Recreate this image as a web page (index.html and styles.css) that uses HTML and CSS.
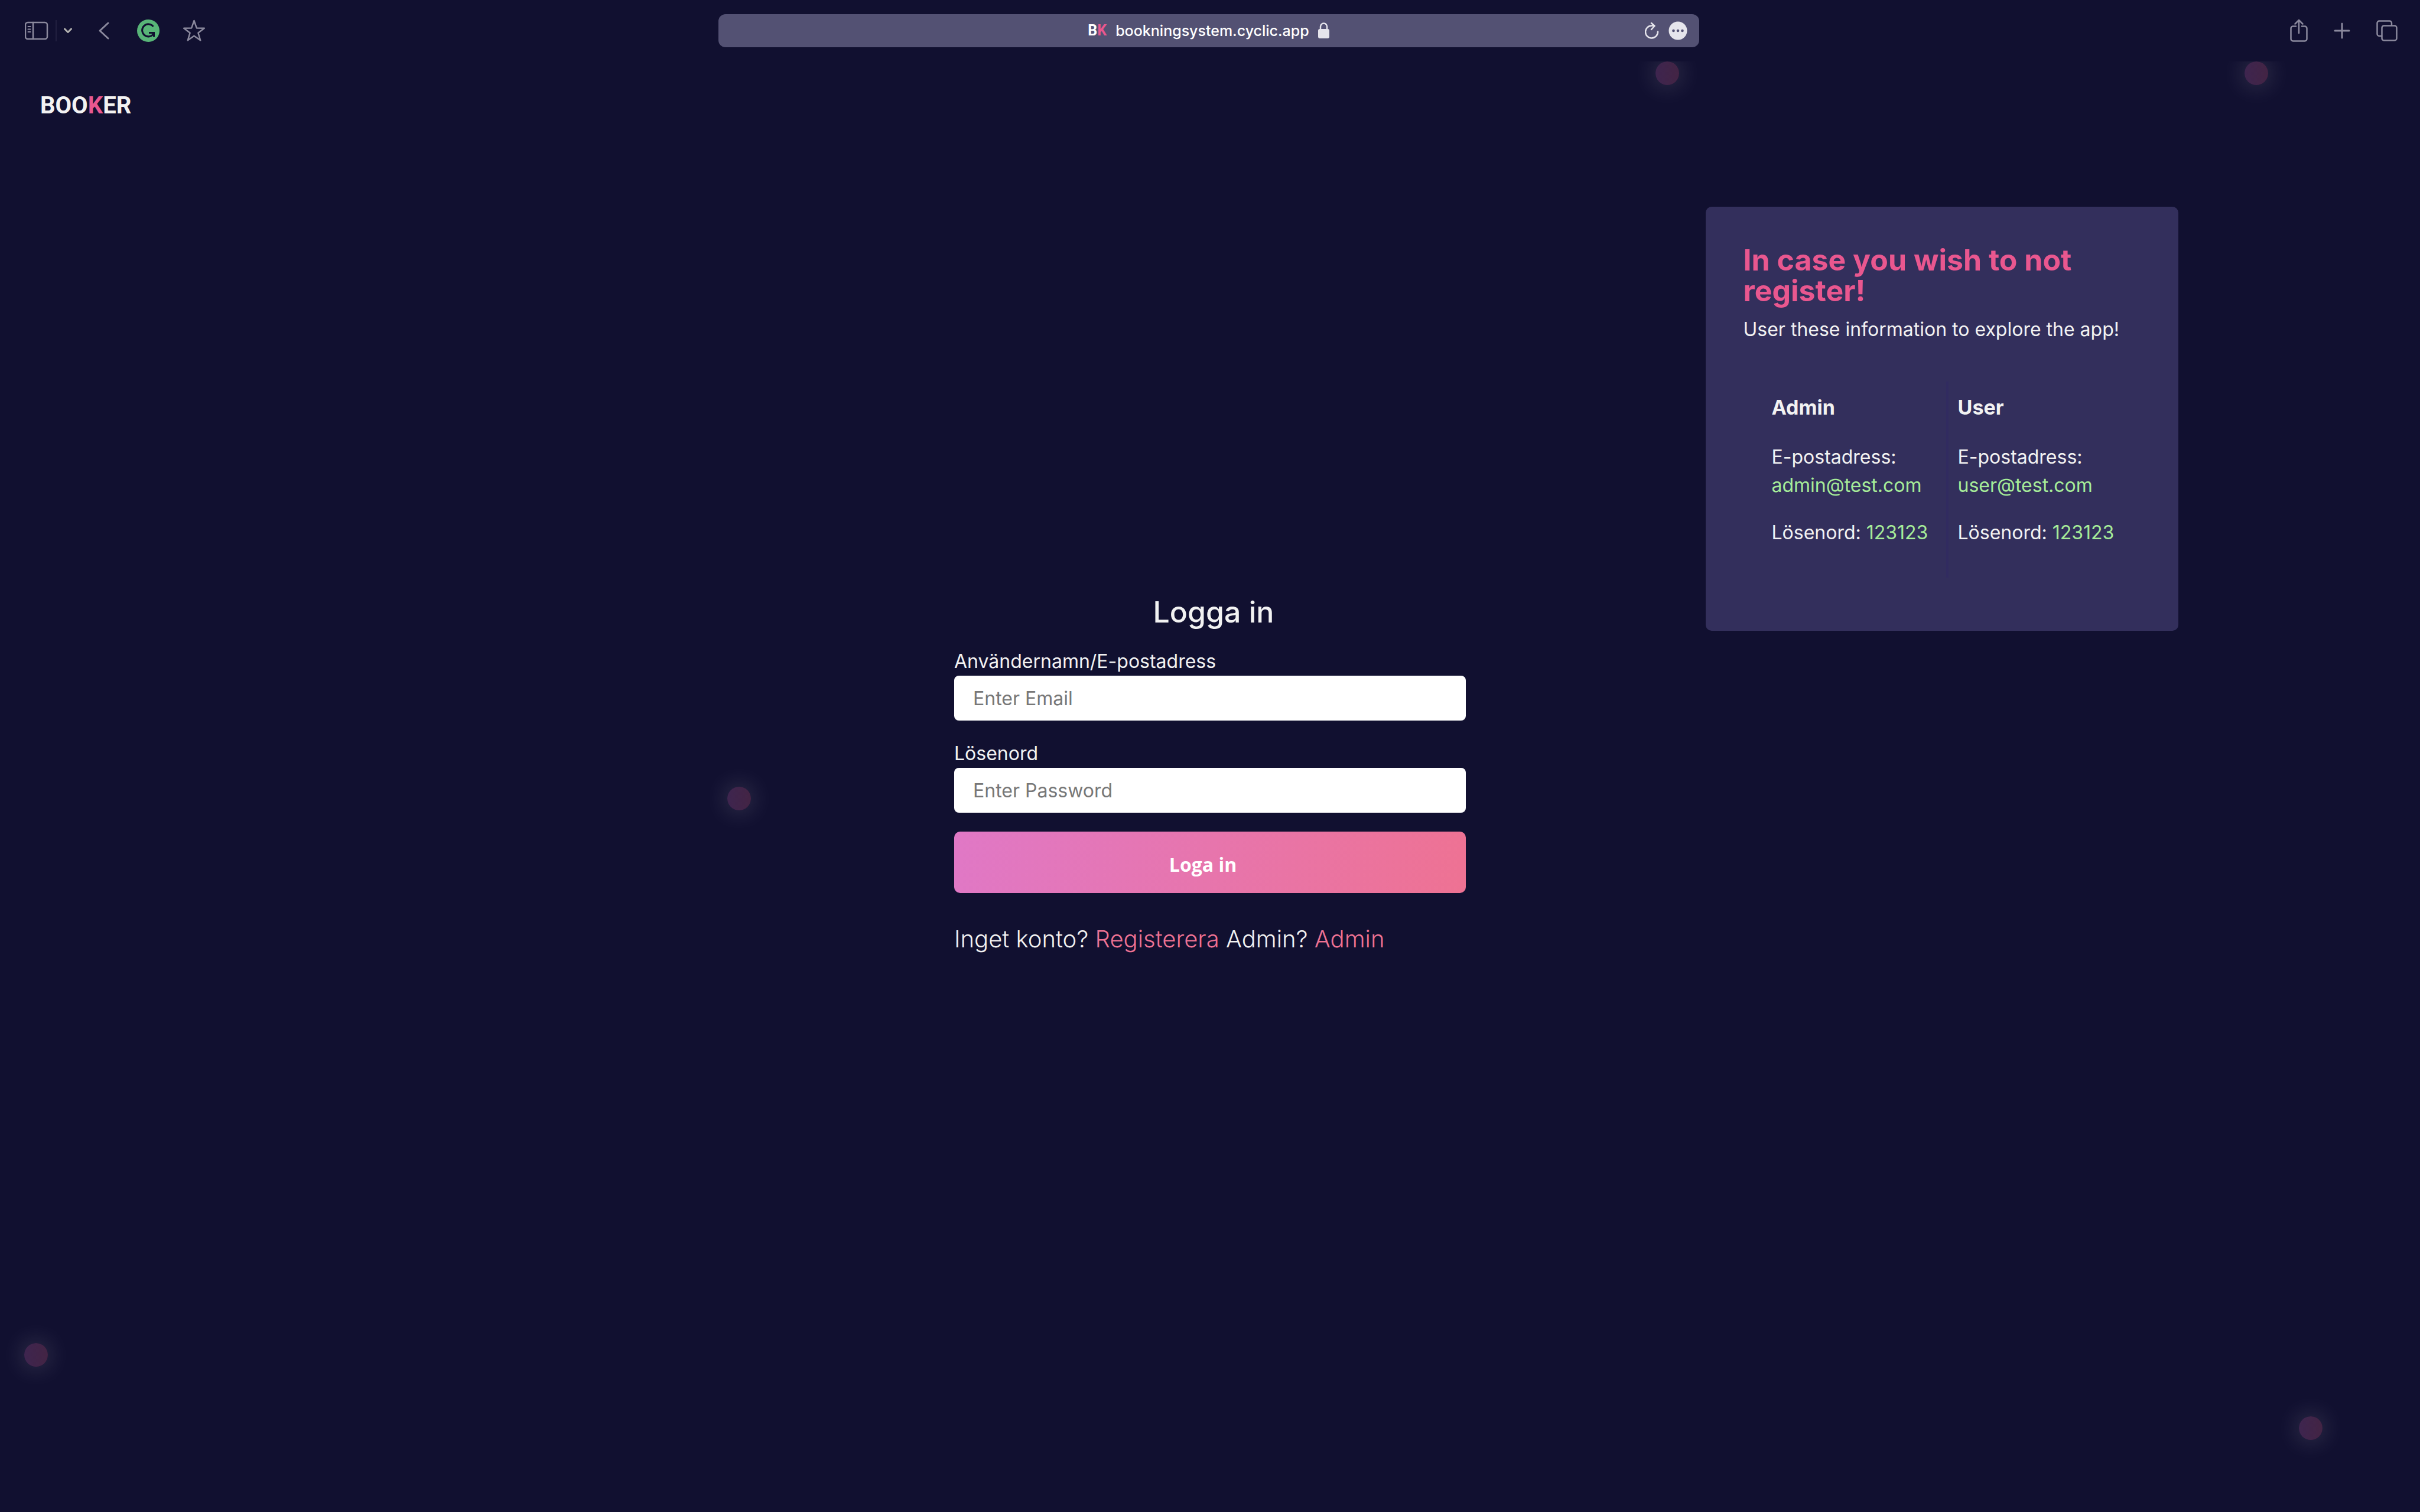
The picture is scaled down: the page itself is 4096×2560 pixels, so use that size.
FILE: index.html
```html
<!DOCTYPE html>
<html lang="sv">
<head>
<meta charset="utf-8">
<title>Booker</title>
<link rel="stylesheet" href="styles.css">
</head>
<body>
<header class="toolbar">
  <div class="tools">
    <div class="tool-pair">
      <button class="tool" aria-label="Sidebar"><svg width="40" height="32" viewBox="0 0 40 32"><rect x="1" y="2" width="37" height="28" rx="4"/><path d="M14 2v28"/><path class="thin" d="M5.500 9h4M5.500 13.500h4M5.500 18h4"/></svg></button>
      <span class="divider"></span>
      <button class="tool tool-light" aria-label="Tab groups"><svg width="14" height="12" viewBox="0 0 14 12"><path class="bold" d="M1.500 3l5.500 5.500L12.500 3"/></svg></button>
    </div>
    <button class="tool" aria-label="Back"><svg width="28" height="32" viewBox="0 0 28 32"><path class="bold" d="M21 3L7 16l14 13"/></svg></button>
    <button class="tool" aria-label="Grammarly"><svg width="40" height="40" viewBox="0 0 40 40"><circle class="disc" cx="21" cy="20" r="19"/><path class="mark" d="M29.500 13A10.500 10.500 0 1 0 30 25"/><path class="mark" d="M22 23.500h8.500v7"/></svg></button>
    <button class="tool" aria-label="Bookmark"><svg width="38" height="38" viewBox="0 0 38 38"><path d="M18.500 2l4.300 12.400 13 .3-10.400 8 3.800 12.600L18.500 27.800 7.800 35.300l3.800-12.600-10.400-8 13-.3z"/></svg></button>
  </div>
  <div class="address">
    <div class="site"><span class="favicon">B<span class="pink">K</span></span><span class="url">bookningsystem.cyclic.app</span><svg class="lock" width="20" height="28" viewBox="0 0 20 28"><rect class="fill" x="0" y="11" width="19" height="16" rx="3"/><path d="M4 12V7a5.500 5.500 0 0 1 11 0v5"/></svg></div>
    <div class="actions">
      <button class="tool" aria-label="Reload"><svg width="24" height="28" viewBox="0 0 24 28"><path d="M22 15.500A10.500 10.500 0 1 1 12 5.500h4"/><path d="M11 1l5.500 5L11 12"/></svg></button>
      <button class="tool" aria-label="More"><svg width="32" height="32" viewBox="0 0 32 32"><circle class="fill" cx="16" cy="16" r="15.500"/><g class="dots"><circle cx="8.500" cy="16" r="2.300"/><circle cx="16" cy="16" r="2.300"/><circle cx="23.500" cy="16" r="2.300"/></g></svg></button>
    </div>
  </div>
  <div class="tools tools-end">
    <button class="tool" aria-label="Share"><svg width="30" height="40" viewBox="0 0 30 40"><path d="M10 12.500H5a3.500 3.500 0 0 0-3.500 3.500v18A3.500 3.500 0 0 0 5 37.500h20a3.500 3.500 0 0 0 3.500-3.500V16a3.500 3.500 0 0 0-3.500-3.500h-5M15 24V3M8.500 8.500L15 2l6.500 6.500"/></svg></button>
    <button class="tool" aria-label="New tab"><svg width="28" height="28" viewBox="0 0 28 28"><path class="bold" d="M14 2v24M2 14h24"/></svg></button>
    <button class="tool" aria-label="Tabs"><svg width="36" height="36" viewBox="0 0 36 36"><path d="M26 8V5a3.500 3.500 0 0 0-3.500-3.500H5A3.500 3.500 0 0 0 1.500 5v18.500A3.500 3.500 0 0 0 5 27h4"/><rect x="9.500" y="9.500" width="25" height="25" rx="3.500"/></svg></button>
  </div>
</header>

<div class="page">
  <span class="bubble bubble-a"></span>
  <span class="bubble bubble-b"></span>
  <span class="bubble bubble-c"></span>
  <span class="bubble bubble-d"></span>
  <span class="bubble bubble-e"></span>

  <nav class="nav"><a class="logo" href="#">BOO<span class="pink">K</span>ER</a></nav>

  <main class="content">
    <form class="login">
      <h1 class="login-title">Logga in</h1>
      <div class="field">
        <label for="email">Användernamn/E-postadress</label>
        <input id="email" type="text" placeholder="Enter Email">
      </div>
      <div class="field">
        <label for="password">Lösenord</label>
        <input id="password" type="password" placeholder="Enter Password">
      </div>
      <button class="submit" type="button">Loga in</button>
      <p class="signup">Inget konto? <a href="#">Registerera</a> Admin? <a href="#">Admin</a></p>
    </form>

    <aside class="card">
      <h2>In case you wish to not register!</h2>
      <p class="lead">User these information to explore the app!</p>
      <div class="accounts">
        <section class="account">
          <h3>Admin</h3>
          <p>E-postadress:<br><span class="value">admin@test.com</span></p>
          <p>Lösenord: <span class="value">123123</span></p>
        </section>
        <section class="account">
          <h3>User</h3>
          <p>E-postadress:<br><span class="value">user@test.com</span></p>
          <p>Lösenord: <span class="value">123123</span></p>
        </section>
      </div>
    </aside>
  </main>
</div>
</body>
</html>
```
FILE: styles.css
```css
* { box-sizing: border-box; }

body {
  margin: 0;
  min-height: 100vh;
  display: flex;
  flex-direction: column;
  background: #111030;
  color: #f2f2f2;
  font-family: Inter, "Noto Sans", sans-serif;
  font-size: 32px;
  font-weight: 400;
  line-height: 48px;
}

h1, h2, h3, p { margin: 0; }
a { text-decoration: none; }
button { border: 0; padding: 0; background: none; font: inherit; }
svg { display: block; fill: none; stroke: currentColor; stroke-width: 2.5; stroke-linecap: round; stroke-linejoin: round; }
.pink { color: #e9578f; }

/* Browser toolbar */
.toolbar {
  display: grid;
  grid-template-columns: 1fr minmax(0, 1660px) 1fr;
  align-items: center;
  height: 104px;
  padding: 0 38px 0 34px;
}
.tools { display: flex; align-items: center; gap: 40px; padding-left: 8px; }
.tools-end { justify-content: flex-end; gap: 44px; padding: 0; }
.tool-pair { display: flex; align-items: center; gap: 12px; }
.tool { color: #8b899d; }
.tool-light { color: #b4b3b0; }
.divider { width: 2px; height: 36px; background: #211f3f; }
.thin { stroke-width: 2; }
.bold { stroke-width: 3; }
.fill { fill: currentColor; stroke: none; }
.disc { fill: #58b578; stroke: none; }
.mark { stroke: #111030; stroke-width: 3; stroke-linecap: butt; stroke-linejoin: miter; }
.dots { fill: #535173; stroke: none; }

.address {
  display: grid;
  grid-template-columns: 1fr auto 1fr;
  align-items: center;
  height: 56px;
  padding: 0 20px;
  border-radius: 12px;
  background: #535173;
}
.site { grid-column: 2; display: flex; align-items: center; gap: 15px; color: #fff; }
.favicon { font-family: Roboto, sans-serif; font-size: 25px; font-weight: 700; line-height: 32px; }
.url { font-size: 25px; font-weight: 500; line-height: 32px; }
.lock { color: #e6e5ec; }
.actions { justify-self: end; display: flex; align-items: center; gap: 16px; }
.actions .tool { color: #e6e5ec; }

/* Page */
.page { position: relative; flex: 1; overflow: hidden; }
.nav { height: 150px; padding: 0 68px; display: flex; align-items: center; }
.logo {
  color: #f2f2f2;
  font-family: Roboto, sans-serif;
  font-size: 40px;
  font-weight: 700;
}

.content {
  display: grid;
  grid-template-columns: 1fr minmax(0, 866px) 1fr;
  align-items: start;
}
.login { grid-column: 2; display: flex; flex-direction: column; padding-top: 752px; }
.login-title { padding-left: 12px; margin-bottom: 30px; font-size: 50px; font-weight: 500; line-height: 60px; text-align: center; }
.field { display: flex; flex-direction: column; margin-bottom: 32px; }
.field label { line-height: 48px; }
.field input {
  height: 76px;
  padding: 0 32px;
  border: 0;
  border-radius: 8px;
  background: #fff;
  font: inherit;
}
.field input::placeholder { color: #777; opacity: 1; }
.submit {
  height: 104px;
  padding: 8px 24px 0 0;
  border-radius: 10px;
  background: linear-gradient(100deg, #e078c6, #ee7293);
  color: #fff;
  font-family: "Open Sans", sans-serif;
  font-size: 32px;
  font-weight: 700;
}
.signup { margin-top: 48px; font-size: 40px; font-weight: 300; line-height: 60px; white-space: nowrap; }
.signup a { color: #ee7293; }

.card {
  justify-self: center;
  width: 800px;
  min-height: 718px;
  margin: 96px 4px 0 0;
  padding: 64px;
  border-radius: 10px;
  background: #332f5c;
}
.card h2 { color: #e9578f; font-size: 50px; font-weight: 700; line-height: 52px; }
.lead { margin-top: 16px; }
.accounts { display: grid; grid-template-columns: 315px 1fr; margin: 64px 0 0 32px; }
.account { min-height: 326px; padding: 20px 16px; }
.account:first-child { border-right: 4px solid #312b60; }
.account h3 { margin-bottom: 36px; font-size: 34px; font-weight: 700; line-height: 48px; }
.account p { margin-bottom: 32px; }
.value { color: #a6ec99; }

/* Floating bubbles */
.bubble {
  position: absolute;
  width: 40px;
  height: 40px;
  border-radius: 50%;
  background: linear-gradient(90deg, #3e254f, #432444);
  box-shadow: 0 0 40px 4px rgba(255, 255, 255, 0.15);
}
.bubble-a { left: 68.4%; top: 0; }
.bubble-b { left: 92.75%; top: 0; }
.bubble-c { left: 30.05%; top: 50%; }
.bubble-d { left: 1%; top: 88.35%; }
.bubble-e { left: 95%; top: 93.4%; }
```
